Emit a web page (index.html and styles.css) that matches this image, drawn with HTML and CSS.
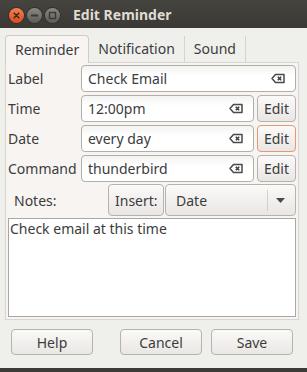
FILE: index.html
```html
<!DOCTYPE html>
<html lang="en">
<head>
    <meta charset="UTF-8">
    <title>Edit Reminder</title>
    <link rel="stylesheet" href="styles.css">
</head>
<body>

<div id="window">
    <div class="titlebar">
        <span class="ctl close">
            <svg width="15" height="15" viewBox="0 0 15 15"><path d="M5.2 5.2 L9.8 9.8 M9.8 5.2 L5.2 9.8" stroke="#3a2a20" stroke-width="1.6" stroke-linecap="round"/></svg>
        </span>
        <span class="ctl">
            <svg width="15" height="15" viewBox="0 0 15 15"><rect x="4" y="6.5" width="7" height="2" fill="#3a3935"/></svg>
        </span>
        <span class="ctl">
            <svg width="15" height="15" viewBox="0 0 15 15"><rect x="4.5" y="4.5" width="6" height="6" fill="none" stroke="#3a3935" stroke-width="1.4"/></svg>
        </span>
        <span class="title">Edit Reminder</span>
    </div>

    <div class="dialog">
        <ul class="tabs">
            <li class="selected">Reminder</li>
            <li>Notification</li>
            <li>Sound</li>
        </ul>

        <div class="frame">
            <div class="form">
                <label>Label</label>
                <div class="entry wide"><span>Check Email</span><i class="clear"></i></div>

                <label>Time</label>
                <div class="entry"><span>12:00pm</span><i class="clear"></i></div>
                <button class="btn">Edit</button>

                <label>Date</label>
                <div class="entry"><span>every day</span><i class="clear"></i></div>
                <button class="btn focus">Edit</button>

                <label>Command</label>
                <div class="entry"><span>thunderbird</span><i class="clear"></i></div>
                <button class="btn">Edit</button>
            </div>

            <div class="notes-row">
                <label>Notes:</label>
                <button class="btn insert">Insert:</button>
                <div class="btn combo">
                    <span>Date</span>
                    <span class="sep"></span>
                    <svg width="9" height="5" viewBox="0 0 9 5"><path d="M0 0 H9 L4.5 5 Z" fill="#4a4a4a"/></svg>
                </div>
            </div>

            <div class="notes">Check email at this time</div>
        </div>

        <div class="actions">
            <button class="btn">Help</button>
            <button class="btn push">Cancel</button>
            <button class="btn">Save</button>
        </div>
    </div>
    <div class="edge"></div>
</div>

<script>
    // the clear icon is the same in every entry
    var aClear = document.querySelectorAll('.clear');
    for(var i=0; i<aClear.length; i++){
        aClear[i].innerHTML = '<svg width="14" height="11" viewBox="0 0 14 11"><path d="M1 5.5 L4.5 1.5 H13 V9.5 H4.5 Z" fill="none" stroke="#4a4a4a" stroke-width="1.5" stroke-linejoin="round"/><path d="M6.8 3.8 L10.2 7.2 M10.2 3.8 L6.8 7.2" stroke="#3c3c3c" stroke-width="1.6"/></svg>';
    }
</script>
</body>
</html>
```

FILE: styles.css
```css
*{
    margin: 0;
    padding: 0;
    box-sizing: border-box;
}
ul, ol{
    list-style: none;
}
body{
    width: 307px;
    height: 372px;
    overflow: hidden;
    background: #eff0ec;
    font-family: "Noto Sans", "DejaVu Sans", sans-serif;
    font-size: 14px;
    color: #3c3c3c;
}

#window{
    width: 307px;
    height: 372px;
    display: flex;
    flex-direction: column;
}

.titlebar{
    height: 28px;
    flex: none;
    display: flex;
    align-items: center;
    padding: 3px 0 0 9px;
    background: linear-gradient(#45443f, #3a3935);
}
.ctl{
    width: 15px;
    height: 15px;
    margin-right: 3px;
    border-radius: 50%;
    background: linear-gradient(#8a8882, #5d5b56);
    box-shadow: 0 0 0 1px #33322e;
    display: flex;
}
.ctl.close{
    background: linear-gradient(#f38052, #dc4c1a);
}
.title{
    margin-left: 10px;
    color: #dfdbd2;
    font-weight: bold;
    font-size: 14px;
    margin-top: -3px;
}

.dialog{
    flex: 1;
    padding: 7px 8px 0 5px;
    display: flex;
    flex-direction: column;
}

.tabs{
    display: flex;
    height: 27px;
    position: relative;
    z-index: 1;
}
.tabs li{
    padding: 0 9px;
    line-height: 26px;
    margin-top: 1px;
    border-right: 1px solid #d6d3cf;
}
.tabs li.selected{
    margin-top: 0;
    line-height: 27px;
    height: 28px;
    background: #f7f4f2;
    border: 1px solid #cfcbc7;
    border-bottom: none;
    border-radius: 4px 4px 0 0;
}

.frame{
    height: 258px;
    background: #f7f4f2;
    border: 1px solid #d8d4d0;
    padding: 2px;
    display: flex;
    flex-direction: column;
}

.form{
    display: grid;
    grid-template-columns: 70px 1fr 39px;
    grid-auto-rows: 27px;
    column-gap: 3px;
    row-gap: 3px;
    align-items: center;
}
.form label{
    line-height: 27px;
}

.entry{
    height: 27px;
    border: 1px solid #b2aea9;
    border-radius: 4px;
    background: linear-gradient(#f3f3f2, #ffffff 40%);
    display: flex;
    align-items: center;
    padding: 0 10px 0 6px;
}
.entry span{
    flex: 1;
}
.entry.wide{
    grid-column: 2 / 4;
}
.clear{
    display: flex;
    width: 14px;
}

.btn{
    height: 27px;
    border: 1px solid #b6b2ae;
    border-radius: 4px;
    background: linear-gradient(#fbfaf9, #e9e6e3);
    font-family: inherit;
    font-size: 14px;
    color: #3c3c3c;
    padding: 0;
}
.btn.focus{
    border-color: #e09a78;
}

.notes-row{
    display: flex;
    height: 32px;
    margin-top: 2px;
    align-items: center;
}
.notes-row label{
    width: 100px;
    padding-left: 6px;
}
.btn.insert{
    width: 56px;
    height: 32px;
    text-align: left;
    padding-left: 6px;
}
.btn.combo{
    flex: 1;
    height: 32px;
    margin-left: 1px;
    display: flex;
    align-items: center;
    padding: 0 10px 0 10px;
}
.combo span{
    flex: 1;
}
.combo .sep{
    flex: none;
    width: 1px;
    height: 21px;
    background: #d3cfcb;
    margin-right: 8px;
}

.notes{
    flex: 1;
    margin-top: 2px;
    background: #fff;
    border: 1px solid #a9a7a4;
    padding: 1px 1px;
    line-height: 18px;
}

.actions{
    display: flex;
    margin-top: 9px;
    padding: 0 6px;
}
.actions .btn{
    width: 82px;
    height: 26px;
    margin-left: 9px;
}
.actions .btn:first-child{
    margin-left: 0;
}
.actions .push{
    margin-left: auto;
}

.edge{
    height: 4px;
    flex: none;
    background: #3c3b37;
}
```
